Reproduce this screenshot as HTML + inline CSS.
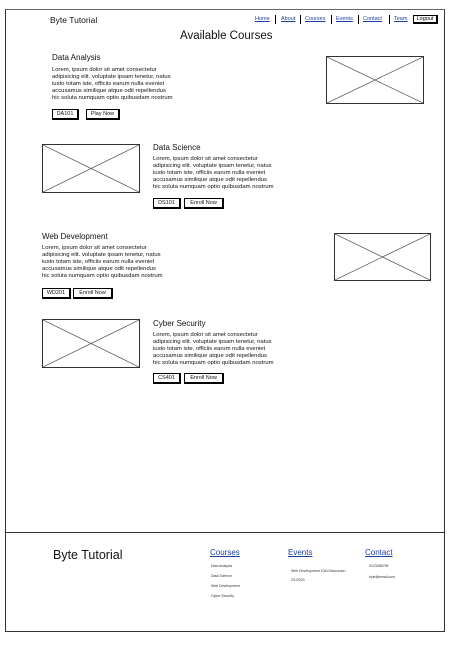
<!DOCTYPE html>
<html><head><style>
*{margin:0;padding:0;box-sizing:border-box}
body{width:458px;height:650px;background:#fff;font-family:"Liberation Sans",sans-serif;color:#111;position:relative;overflow:hidden}
.a{position:absolute;white-space:nowrap}
.frame{position:absolute;left:5px;top:9px;width:440px;height:623px;border:1px solid #333;border-top:1px solid #666}
.ft{position:absolute;left:5px;top:532px;width:440px;height:1px;background:#333}
.p{font-size:5.9px;line-height:6.9px}
.h{font-size:8px}
.b{position:absolute;height:11px;border:1px solid #000;border-right:2px solid #000;border-bottom:2px solid #000;font-size:5.5px;line-height:8px;text-align:center}
.img{position:absolute;border:1px solid #333}
.img svg{display:block;width:100%;height:100%}
.nav{font-size:5.5px;color:#1a3f9c;text-decoration:underline}
.sep{position:absolute;width:1px;height:9px;background:#000;top:15px}
.fl{font-size:8px;color:#1a3f9c;text-decoration:underline}
.fs{font-size:3.5px;color:#333}
</style></head><body>
<div class="frame"></div>
<div class="ft"></div>
<div class="a" style="left:50px;top:15px;font-size:8.5px">Byte Tutorial</div>
<div class="a nav" style="left:255px;top:16px">Home</div><div class="sep" style="left:275px"></div>
<div class="a nav" style="left:281px;top:16px">About</div><div class="sep" style="left:300px"></div>
<div class="a nav" style="left:305px;top:16px">Courses</div><div class="sep" style="left:331px"></div>
<div class="a nav" style="left:336px;top:16px">Events</div><div class="sep" style="left:358px"></div>
<div class="a nav" style="left:363px;top:16px">Contact</div><div class="sep" style="left:389px"></div>
<div class="a nav" style="left:394px;top:16px">Team</div>
<div class="b" style="left:413px;top:15px;width:25px;height:9px;line-height:6px;color:#000">Logout</div>
<div class="a" style="left:180px;top:30px;font-size:11.5px">Available Courses</div>

<div class="a h" style="left:52px;top:53px">Data Analysis</div>
<div class="a p" style="left:52px;top:67px">Lorem, ipsum dolor sit amet consectetur<br>adipisicing elit. voluptate ipsam tenetur, natus<br>iusto totam iste, officiis earum nulla eveniet<br>accusamus similique atque odit repellendus<br>hic soluta numquam optio quibusdam nostrum</div>
<div class="b" style="left:52px;top:109px;width:27px">DA101</div>
<div class="b" style="left:86px;top:109px;width:34px">Play Now</div>
<div class="img" style="left:326px;top:56px;width:98px;height:48px"><svg viewBox="0 0 98 48" preserveAspectRatio="none"><path d="M0 0L98 48M98 0L0 48" stroke="#555" stroke-width=".8"/></svg></div>

<div class="img" style="left:42px;top:144px;width:98px;height:49px"><svg viewBox="0 0 98 48" preserveAspectRatio="none"><path d="M0 0L98 48M98 0L0 48" stroke="#555" stroke-width=".8"/></svg></div>
<div class="a h" style="left:153px;top:143px">Data Science</div>
<div class="a p" style="left:153px;top:156px">Lorem, ipsum dolor sit amet consectetur<br>adipisicing elit. voluptate ipsam tenetur, natus<br>iusto totam iste, officiis earum nulla eveniet<br>accusamus similique atque odit repellendus<br>hic soluta numquam optio quibusdam nostrum</div>
<div class="b" style="left:153px;top:198px;width:28px">DS101</div>
<div class="b" style="left:184px;top:198px;width:40px">Enroll Now</div>

<div class="a h" style="left:42px;top:232px">Web Development</div>
<div class="a p" style="left:42px;top:245px">Lorem, ipsum dolor sit amet consectetur<br>adipisicing elit. voluptate ipsam tenetur, natus<br>iusto totam iste, officiis earum nulla eveniet<br>accusamus similique atque odit repellendus<br>hic soluta numquam optio quibusdam nostrum</div>
<div class="b" style="left:42px;top:288px;width:29px">WD201</div>
<div class="b" style="left:73px;top:288px;width:40px">Enroll Now</div>
<div class="img" style="left:334px;top:233px;width:97px;height:48px"><svg viewBox="0 0 98 48" preserveAspectRatio="none"><path d="M0 0L98 48M98 0L0 48" stroke="#555" stroke-width=".8"/></svg></div>

<div class="img" style="left:42px;top:319px;width:98px;height:49px"><svg viewBox="0 0 98 48" preserveAspectRatio="none"><path d="M0 0L98 48M98 0L0 48" stroke="#555" stroke-width=".8"/></svg></div>
<div class="a h" style="left:153px;top:319px">Cyber Security</div>
<div class="a p" style="left:153px;top:332px">Lorem, ipsum dolor sit amet consectetur<br>adipisicing elit. voluptate ipsam tenetur, natus<br>iusto totam iste, officiis earum nulla eveniet<br>accusamus similique atque odit repellendus<br>hic soluta numquam optio quibusdam nostrum</div>
<div class="b" style="left:153px;top:373px;width:28px">CS401</div>
<div class="b" style="left:184px;top:373px;width:40px">Enroll Now</div>

<div class="a" style="left:53px;top:548px;font-size:12.5px">Byte Tutorial</div>
<div class="a fl" style="left:210px;top:548px">Courses</div>
<div class="a fs" style="left:211px;top:564px">Data Analysis</div>
<div class="a fs" style="left:211px;top:574px">Data Science</div>
<div class="a fs" style="left:211px;top:584px">Web Development</div>
<div class="a fs" style="left:211px;top:594px">Cyber Security</div>
<div class="a fl" style="left:288px;top:548px">Events</div>
<div class="a fs" style="left:291px;top:569px">Web Development 10th Discussion</div>
<div class="a fs" style="left:291px;top:578px">2/1/2023</div>
<div class="a fl" style="left:365px;top:548px">Contact</div>
<div class="a fs" style="left:369px;top:564px">0123456789</div>
<div class="a fs" style="left:369px;top:575px">byte@email.com</div>
</body></html>
